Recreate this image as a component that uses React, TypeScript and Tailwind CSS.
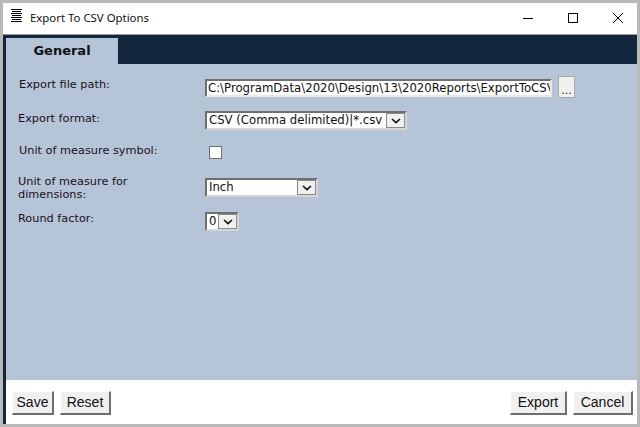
import React from "react";

const V = "font-['DejaVu_Sans',sans-serif]";

function Chevron() {
  return (
    <svg width="10" height="6" viewBox="0 0 10 6" fill="none" stroke="#111" strokeWidth="1.6">
      <path d="M1 1l4 3.6L9 1" />
    </svg>
  );
}

function Select({ text, width }: { text: string; width: string }) {
  return (
    <div className={`${width} h-[19px] flex items-center border-2 border-t-[#6f6f6f] border-l-[#6f6f6f] border-r-[#d6d6d6] border-b-[#d6d6d6] bg-white box-border`}>
      <span className={`flex-1 pl-[2px] text-[11.7px] leading-[15px] text-[#111] whitespace-nowrap ${V}`}>{text}</span>
      <span className="w-[19px] h-[15px] bg-[#f0f0f0] border border-[#8a8a8a] flex items-center justify-center shrink-0">
        <Chevron />
      </span>
    </div>
  );
}

function Btn({ children, className = "" }: { children: React.ReactNode; className?: string }) {
  return (
    <button className={`h-[24px] bg-[#f0f0f0] border border-t-white border-l-white border-r-[#6e6e6e] border-b-[#6e6e6e] border-r-2 border-b-2 text-[14px] text-[#111] font-['Liberation_Sans',sans-serif] flex items-center justify-center ${className}`}>
      {children}
    </button>
  );
}

function Row({ label, h, pad, children }: { label: React.ReactNode; h: string; pad: string; children?: React.ReactNode }) {
  return (
    <div className={`flex items-start ${h}`}>
      <div className={`w-[199px] shrink-0 ${pad} text-[11.3px] leading-[13px] text-[#1a1020] ${V}`}>{label}</div>
      {children}
    </div>
  );
}

export default function App() {
  return (
    <div className="w-[640px] h-[427px] bg-[#b9b9b9] pt-[3px] px-[3px] pb-[3px] box-border overflow-hidden flex flex-col">
      <div className="h-[32px] pb-[2px] bg-white flex items-center shrink-0 relative border-b border-[#9a9a9a]">
        <svg className="ml-[8px] -mt-[5px]" width="11" height="13" viewBox="0 0 11 13" stroke="#000" strokeWidth="1">
          <path d="M0 .5h11M1 2.5h9M0 4.5h11M1 6.5h9M0 8.5h11M1 10.5h9M0 12.5h11" />
        </svg>
        <span className="ml-[8px] text-[11.4px] text-[#111] font-['Noto_Sans',sans-serif]">Export To CSV Options</span>
        <div className="ml-auto flex items-center">
          <svg width="12" height="12" viewBox="0 0 12 12" stroke="#000" fill="none" strokeWidth="1" className="mr-[33px]"><path d="M1 6.5h10" /></svg>
          <svg width="12" height="12" viewBox="0 0 12 12" stroke="#000" fill="none" strokeWidth="1" className="mr-[33px]"><rect x="1.5" y="1.5" width="9" height="9" /></svg>
          <svg width="12" height="12" viewBox="0 0 12 12" stroke="#000" fill="none" strokeWidth="1" className="mr-[13px]"><path d="M1 1l10 10M11 1L1 11" /></svg>
        </div>
      </div>
      <div className="flex-1 flex flex-col border-l-[3px] border-[#12273d] bg-[#12273d] pt-[3px] min-h-0">
        <div className="h-[26px] flex shrink-0">
          <div className={`w-[112px] bg-[#b5c5d7] flex items-center justify-center text-[13px] font-bold text-[#111] ${V}`}>General</div>
        </div>
        <div className="flex-1 bg-[#b5c5d7] pt-[14px] flex flex-col">
          <Row label="Export file path:" h="h-[34px]" pad="pl-[13px]">
            <div className={`w-[347px] h-[18px] mt-[1px] border-2 border-t-[#6f6f6f] border-l-[#6f6f6f] border-r-[#e8e8e8] border-b-[#e8e8e8] bg-white box-border pl-[1px] text-[11.7px] leading-[15px] text-[#111] whitespace-nowrap overflow-hidden ${V}`}>
              C:\ProgramData\2020\Design\13\2020Reports\ExportToCSV
            </div>
            <button className={`ml-[6px] -mt-[2px] w-[17px] h-[22px] bg-[#f0f0f0] border border-[#a8a8a8] text-[11px] leading-none text-[#111] ${V} pt-[6px]`}>...</button>
          </Row>
          <Row label="Export format:" h="h-[32px]" pad="pl-[12px]">
            <div className="-mt-[1px]">
              <Select text="CSV (Comma delimited)|*.csv" width="w-[202px]" />
            </div>
          </Row>
          <Row label="Unit of measure symbol:" h="h-[31px]" pad="pl-[13px]">
            <div className="ml-[4px] mt-[2px] w-[13px] h-[13px] bg-white border border-[#6f6f6f]" />
          </Row>
          <Row label={<>Unit of measure for<br />dimensions:</>} h="h-[37px]" pad="pl-[12px]">
            <div className="mt-[3px]">
              <Select text="Inch" width="w-[113px]" />
            </div>
          </Row>
          <Row label="Round factor:" h="h-[20px]" pad="pl-[12px]">
            <Select text="0" width="w-[34px]" />
          </Row>
        </div>
        <div className="h-[44px] shrink-0 bg-white flex items-center pl-[6px] pr-[4px] pt-[2px] gap-[6px]">
          <Btn className="w-[42px]">Save</Btn>
          <Btn className="w-[51px]">Reset</Btn>
          <Btn className="w-[57px] ml-auto">Export</Btn>
          <Btn className="w-[60px]">Cancel</Btn>
        </div>
      </div>
    </div>
  );
}
